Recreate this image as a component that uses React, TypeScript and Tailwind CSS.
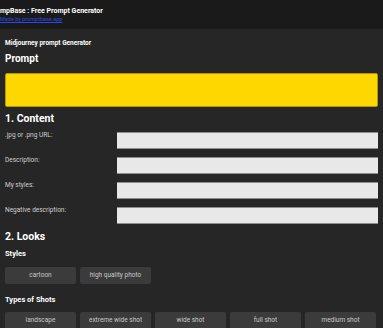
import React from "react";

const font = { fontFamily: "Roboto, 'Liberation Sans', sans-serif" };

function Field({ label }: { label: string }) {
  return (
    <div className="flex items-start h-[17px]">
      <div className="w-[112px] text-[6.5px] leading-[8px] text-[#cfcfcf] -mt-[1px]">{label}</div>
      <div className="flex-1 h-[17px] bg-[#e8e8e8] border-t border-b border-[#8e8e8e]" />
    </div>
  );
}

function Btn({ label }: { label: string }) {
  return (
    <div className="w-[71px] h-[17px] shrink-0 rounded-[2px] bg-[#3b3b3b] flex items-center justify-center text-[6.5px] text-[#c8c8c8]">
      {label}
    </div>
  );
}

export default function App() {
  return (
    <div style={font} className="w-[383px] h-[328px] overflow-hidden bg-[#262626]">
      <div className="h-[29px] bg-[#1a1a1a] pt-[7px]">
        <div className="text-[7px] leading-[8px] font-bold text-white whitespace-nowrap">mpBase : Free Prompt Generator</div>
        <div className="text-[5.5px] leading-[6px] mt-[1px] text-[#2b48e0] underline whitespace-nowrap">Made by promptbase.app</div>
      </div>
      <div className="px-[5px]">
        <div className="mt-[10px] text-[6.5px] leading-[8px] font-bold text-white">Midjourney prompt Generator</div>
        <div className="mt-[6px] text-[10px] leading-[12px] font-bold text-white">Prompt</div>
        <div className="mt-[8px] h-[34px] bg-[#ffd700] border border-[#b39700] rounded-[2px]" />
        <div className="mt-[6px] text-[10.5px] leading-[12px] font-bold text-white">1. Content</div>
        <div className="mt-[7px] flex flex-col gap-[8px]">
          <Field label=".jpg or .png URL:" />
          <Field label="Description:" />
          <Field label="My styles:" />
          <Field label="Negative description:" />
        </div>
        <div className="mt-[7px] text-[10.5px] leading-[12px] font-bold text-white">2. Looks</div>
        <div className="mt-[6px] text-[7.5px] leading-[10px] font-bold text-white">Styles</div>
        <div className="mt-[8px] flex gap-[4px]">
          <Btn label="cartoon" />
          <Btn label="high quality photo" />
        </div>
        <div className="mt-[11px] text-[7.5px] leading-[10px] font-bold text-white">Types of Shots</div>
        <div className="mt-[7px] flex gap-[4px]">
          <Btn label="landscape" />
          <Btn label="extreme wide shot" />
          <Btn label="wide shot" />
          <Btn label="full shot" />
          <Btn label="medium shot" />
        </div>
      </div>
    </div>
  );
}
